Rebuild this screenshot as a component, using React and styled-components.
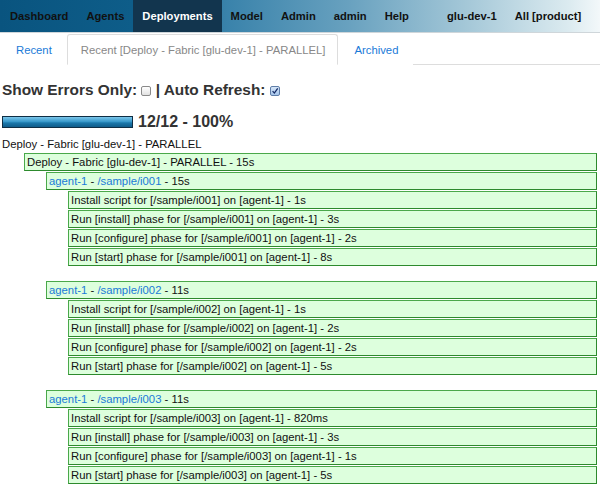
import styled, { createGlobalStyle } from 'styled-components';

const GlobalStyle = createGlobalStyle`
  body {
    margin: 0;
    background: #fff;
    font-family: "Liberation Sans", Arial, Helvetica, sans-serif;
  }
`

const groups = [
  { id: 'i001', total: '15s', steps: ['1s', '3s', '2s', '8s'] },
  { id: 'i002', total: '11s', steps: ['1s', '2s', '2s', '5s'] },
  { id: 'i003', total: '11s', steps: ['820ms', '3s', '1s', '5s'] },
];

const stepLabels = [
  (m) => `Install script for [/sample/${m}] on [agent-1]`,
  (m) => `Run [install] phase for [/sample/${m}] on [agent-1]`,
  (m) => `Run [configure] phase for [/sample/${m}] on [agent-1]`,
  (m) => `Run [start] phase for [/sample/${m}] on [agent-1]`,
];

const CheckBox = ({ checked }) => (
  <Box $checked={checked}>
    {checked && (
      <svg width="10" height="10" viewBox="0 0 10 10">
        <path d="M2 5.2 L4.2 7.6 L8.4 1.6" fill="none" stroke="#142a66" strokeWidth="1.6" />
      </svg>
    )}
  </Box>
);

const App = () => {
  return (
    <div>
      <GlobalStyle />
      <NavBar>
        <NavItem>Dashboard</NavItem>
        <NavItem>Agents</NavItem>
        <NavItem $active>Deployments</NavItem>
        <NavItem>Model</NavItem>
        <NavItem>Admin</NavItem>
        <NavItem>admin</NavItem>
        <NavItem>Help</NavItem>
        <NavRight>
          <NavItem>glu-dev-1</NavItem>
          <NavItem>All [product]</NavItem>
        </NavRight>
      </NavBar>

      <Tabs>
        <Tab>Recent</Tab>
        <Tab $active>Recent [Deploy - Fabric [glu-dev-1] - PARALLEL]</Tab>
        <Tab>Archived</Tab>
      </Tabs>

      <Content>
        <Heading>
          Show Errors Only: <CheckBox /> | Auto Refresh: <CheckBox checked />
        </Heading>

        <ProgressRow>
          <ProgressBar />
          <ProgressText>12/12 - 100%</ProgressText>
        </ProgressRow>

        <Title>Deploy - Fabric [glu-dev-1] - PARALLEL</Title>

        <Level>
          <Step>Deploy - Fabric [glu-dev-1] - PARALLEL - 15s</Step>
          <Level>
            {groups.map((g) => (
              <Group key={g.id}>
                <Step>
                  <Link>agent-1</Link> - <Link>/sample/{g.id}</Link> - {g.total}
                </Step>
                <Level>
                  {g.steps.map((t, i) => (
                    <Step key={i}>{stepLabels[i](g.id)} - {t}</Step>
                  ))}
                </Level>
              </Group>
            ))}
          </Level>
        </Level>
      </Content>
    </div>
  );
};

const NavBar = styled.div`
  display: flex;
  align-items: stretch;
  height: 32px;
  padding-left: 1px;
  background: linear-gradient(to right, #09547f 0%, #0e5d89 22%, #3a83ab 38%, #68a1bf 58%, #a5c8d8 78%, #dcebf0 95%, #f3f8fa 100%);
  border-bottom: 1px solid #cfd6da;
`

const NavItem = styled.a`
  display: flex;
  align-items: center;
  padding: 0 9px;
  font-size: 11.2px;
  font-weight: 700;
  color: ${(p) => (p.$active ? '#fff' : '#111')};
  background: ${(p) => (p.$active ? '#12354e' : 'transparent')};
  white-space: nowrap;
  cursor: pointer;
`

const NavRight = styled.div`
  display: flex;
  margin-left: 20px;
`

const Tabs = styled.div`
  display: flex;
  height: 30px;
  margin-top: 1px;
  border-bottom: 1px solid #ddd;
`

const Tab = styled.a`
  display: flex;
  align-items: center;
  padding: ${(p) => (p.$active ? '0 12px 0 13px' : '0 14px 0 15px')};
  margin-bottom: -1px;
  font-size: 11.3px;
  color: ${(p) => (p.$active ? '#888' : '#1a7ad8')};
  background: #fff;
  border: 1px solid ${(p) => (p.$active ? '#ddd' : 'transparent')};
  border-bottom-color: ${(p) => (p.$active ? '#fff' : 'transparent')};
  border-radius: 3px 3px 0 0;
  cursor: pointer;
`

const Content = styled.div`
  padding: 0 3px 0 2px;
`

const Heading = styled.div`
  margin-top: 15px;
  font-size: 15.4px;
  font-weight: 700;
  line-height: 20px;
  color: #333;
  white-space: nowrap;
`

const Box = styled.span`
  display: inline-flex;
  align-items: center;
  justify-content: center;
  vertical-align: -1px;
  box-sizing: border-box;
  width: 10px;
  height: 10px;
  border: 1px solid ${(p) => (p.$checked ? '#5f7ea8' : '#8a8a8a')};
  border-radius: 2px;
  background: ${(p) => (p.$checked ? 'linear-gradient(#d6e6f8, #a4c4ea)' : 'linear-gradient(#fff, #e2e2e2)')};
`

const ProgressRow = styled.div`
  display: flex;
  align-items: center;
  margin-top: 12px;
  height: 20px;
`

const ProgressBar = styled.div`
  box-sizing: border-box;
  width: 131px;
  height: 12px;
  border: 1px solid #0f2e44;
  background: linear-gradient(#7cc6ea 0%, #3a9acb 45%, #1a77aa 60%, #0f5c8a 100%);
`

const ProgressText = styled.span`
  margin-left: 5px;
  font-size: 16px;
  font-weight: 700;
  color: #333;
`

const Title = styled.div`
  margin-top: 4px;
  font-size: 11.3px;
  line-height: 16px;
  color: #111;
`

const Level = styled.div`
  margin-left: 22px;
  margin-top: 1px;
`

const Group = styled.div`
  margin-bottom: 15px;
`

const Step = styled.div`
  box-sizing: border-box;
  height: 18px;
  margin-bottom: 1px;
  padding: 0 2px;
  font-size: 11.3px;
  line-height: 16px;
  color: #111;
  background: #dfd;
  border: 1px solid #4aa84a;
  border-right-color: #2d8a2d;
  border-bottom-color: #2d8a2d;
  white-space: nowrap;
`

const Link = styled.a`
  color: #1a7ad8;
  cursor: pointer;
`

export default App;
